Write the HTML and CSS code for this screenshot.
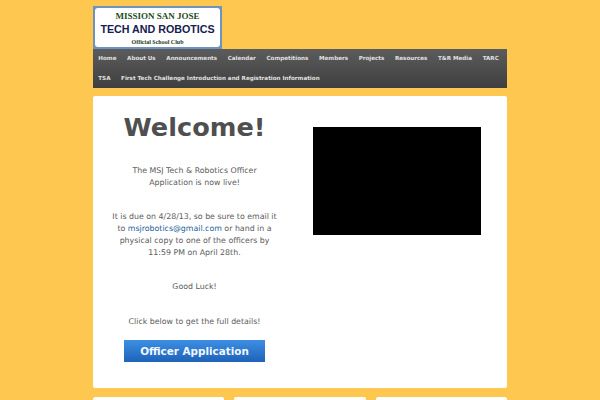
FILE: index.html
```html
<!DOCTYPE html>
<html>
<head>
<meta name="viewport" content="width=device-width, initial-scale=1">
<title>MSJ Tech and Robotics</title>
<link rel="stylesheet" href="styles.css">
</head>
<body>

<div class="wrapper">
  <div class="logo">
    <div class="logo-inner">
      <div class="logo-top">MISSION SAN JOSE</div>
      <div class="logo-main">TECH AND ROBOTICS</div>
      <div class="logo-sub">Official School Club</div>
    </div>
  </div>

  <ul class="nav">
    <li><a href="#">Home</a></li>
    <li><a href="#">About Us</a></li>
    <li><a href="#">Announcements</a></li>
    <li><a href="#">Calendar</a></li>
    <li><a href="#">Competitions</a></li>
    <li><a href="#">Members</a></li>
    <li><a href="#">Projects</a></li>
    <li><a href="#">Resources</a></li>
    <li><a href="#">T&amp;R Media</a></li>
    <li><a href="#">TARC</a></li>
    <li><a href="#">TSA</a></li>
    <li><a href="#">First Tech Challenge Introduction and Registration Information</a></li>
  </ul>

  <div class="content">
    <div class="left">
      <h1>Welcome!</h1>
      <p>The MSJ Tech &amp; Robotics Officer<br>Application is now live!</p>
      <p>It is due on 4/28/13, so be sure to email it<br>to <a href="#">msjrobotics@gmail.com</a> or hand in a<br>physical copy to one of the officers by<br>11:59 PM on April 28th.</p>
      <p>Good Luck!</p>
      <p class="last">Click below to get the full details!</p>
      <a class="button" href="#">Officer Application</a>
    </div>
    <div class="right">
      <div class="video"></div>
    </div>
  </div>

  <div class="cards">
    <div class="card"></div>
    <div class="card"></div>
    <div class="card"></div>
  </div>
</div>

</body>
</html>
```

FILE: styles.css
```css
html, body {
  height: 100%;
  overflow: hidden;
}

body {
  margin: 0;
  background-color: #fec850;
  font-family: "DejaVu Sans", sans-serif;
  font-size: 7.85px;
  color: #5c5c5c;
}

.wrapper {
  width: 414px;
  margin-left: 93px;
  padding-top: 6px;
}

/* Logo */
.logo {
  width: 129px;
  height: 43px;
  box-sizing: border-box;
  padding: 2px;
  background-color: #6f93c0;
}

.logo-inner {
  height: 39px;
  box-sizing: border-box;
  padding-top: 2px;
  background-color: #fff;
  border-radius: 3px;
  text-align: center;
  color: #14204f;
}

.logo-top {
  font-family: "Liberation Serif", serif;
  font-size: 9px;
  font-weight: bold;
  line-height: 13px;
  color: #1c4a24;
}

.logo-main {
  font-family: "Liberation Sans", sans-serif;
  font-size: 10.7px;
  font-weight: bold;
  line-height: 13px;
}

.logo-sub {
  font-family: "Liberation Serif", serif;
  font-size: 6px;
  font-weight: bold;
  line-height: 12px;
  color: #1c3a24;
}

/* Nav */
.nav {
  display: flex;
  flex-wrap: wrap;
  margin: 0;
  padding: 0;
  height: 39px;
  list-style: none;
  background: linear-gradient(#5c5c5c, #3f3f3f);
}

.nav li {
  height: 19.5px;
}

.nav a {
  display: block;
  padding: 0 5.3px;
  font-size: 5.6px;
  font-weight: bold;
  line-height: 19.5px;
  color: #e0e0e0;
  text-decoration: none;
}

/* Main box */
.content {
  display: flex;
  height: 292px;
  margin-top: 8px;
  background-color: #fff;
  border-radius: 2px;
}

.left {
  width: 175px;
  margin-left: 14px;
  text-align: center;
}

.left h1 {
  margin: 11px 0 18px;
  font-size: 25.6px;
  font-weight: bold;
  line-height: 40px;
  color: #4f4f4f;
}

.left p {
  margin: 0 0 23px;
  line-height: 11.7px;
}

.left p.last {
  margin-bottom: 12px;
}

.left a {
  color: #1c5f9e;
  text-decoration: none;
}

.left .button {
  display: block;
  width: 141px;
  height: 22px;
  margin: 0 auto;
  background: linear-gradient(#3d8fe4, #1e63b8);
  font-size: 10.4px;
  font-weight: bold;
  line-height: 22px;
  color: #f2f7fd;
}

.right {
  margin-left: 31px;
  padding-top: 31px;
}

.video {
  width: 168px;
  height: 108px;
  background-color: #000;
}

/* Boxes under main, cut by the window */
.cards {
  display: flex;
  gap: 10px;
  margin-top: 9px;
}

.card {
  flex: 1;
  height: 3px;
  background-color: #fff;
  border-radius: 2px 2px 0 0;
}
```
